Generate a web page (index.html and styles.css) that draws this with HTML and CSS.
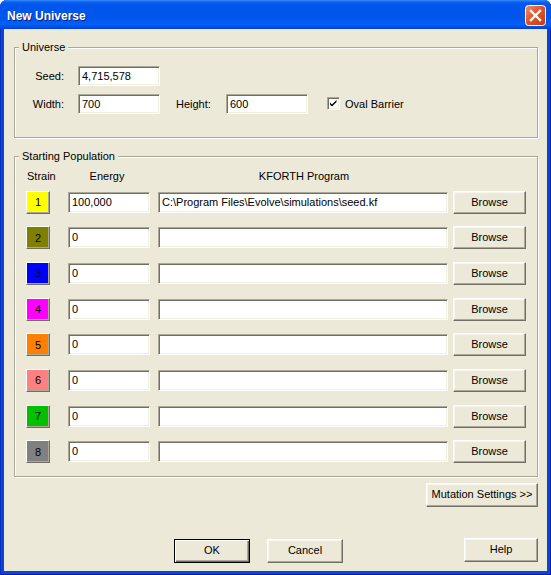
FILE: index.html
```html
<!DOCTYPE html>
<html>
<head>
<meta charset="utf-8">
<link rel="stylesheet" href="styles.css">
</head>
<body>
<div class="window">
  <div class="titlebar">
    <span class="title">New Universe</span>
    <span class="close">
      <svg width="21" height="21" viewBox="0 0 21 21">
        <defs>
          <linearGradient id="cg" x1="0" y1="0" x2="1" y2="1">
            <stop offset="0" stop-color="#F0906E"/>
            <stop offset="0.45" stop-color="#E0552C"/>
            <stop offset="1" stop-color="#C23A12"/>
          </linearGradient>
        </defs>
        <rect x="0.5" y="0.5" width="20" height="20" rx="3" ry="3" fill="url(#cg)" stroke="#fff" stroke-width="1"/>
        <path d="M6 6 L15 15 M15 6 L6 15" stroke="#fff" stroke-width="2.4" stroke-linecap="square"/>
      </svg>
    </span>
  </div>
  <div class="client">
    <div class="group group-universe">
      <div class="legend">Universe</div>
      <div class="urow urow-first">
        <span class="ulabel">Seed:</span>
        <div class="edit uedit">4,715,578</div>
      </div>
      <div class="urow">
        <span class="ulabel">Width:</span>
        <div class="edit uedit">700</div>
        <span class="hlabel">Height:</span>
        <div class="edit uedit">600</div>
        <span class="checkbox">
          <svg width="13" height="13" viewBox="0 0 13 13">
            <path d="M3 5.5 L5 7.5 L9.5 3 L9.5 5 L5 9.5 L3 7.5 Z" fill="#000"/>
          </svg>
        </span>
        <span class="checklabel">Oval Barrier</span>
      </div>
    </div>

    <div class="group group-pop">
      <div class="legend">Starting Population</div>
      <div class="prow phead">
        <span class="h-strain">Strain</span>
        <span class="h-energy">Energy</span>
        <span class="h-prog">KFORTH Program</span>
        <span class="h-browse"></span>
      </div>
      <div class="rows">
        <div class="prow"><span class="swatch s1">1</span><div class="edit eedit">100,000</div><div class="edit pedit">C:\Program Files\Evolve\simulations\seed.kf</div><span class="btn browse">Browse</span></div>
        <div class="prow"><span class="swatch s2">2</span><div class="edit eedit">0</div><div class="edit pedit"></div><span class="btn browse">Browse</span></div>
        <div class="prow"><span class="swatch s3">3</span><div class="edit eedit">0</div><div class="edit pedit"></div><span class="btn browse">Browse</span></div>
        <div class="prow"><span class="swatch s4">4</span><div class="edit eedit">0</div><div class="edit pedit"></div><span class="btn browse">Browse</span></div>
        <div class="prow"><span class="swatch s5">5</span><div class="edit eedit">0</div><div class="edit pedit"></div><span class="btn browse">Browse</span></div>
        <div class="prow"><span class="swatch s6">6</span><div class="edit eedit">0</div><div class="edit pedit"></div><span class="btn browse">Browse</span></div>
        <div class="prow"><span class="swatch s7">7</span><div class="edit eedit">0</div><div class="edit pedit"></div><span class="btn browse">Browse</span></div>
        <div class="prow"><span class="swatch s8">8</span><div class="edit eedit">0</div><div class="edit pedit"></div><span class="btn browse">Browse</span></div>
      </div>
    </div>

    <div class="mutrow"><span class="btn mut">Mutation Settings &gt;&gt;</span></div>

    <div class="footer">
      <span class="btn default">OK</span>
      <span class="btn cancel">Cancel</span>
      <span class="btn help">Help</span>
    </div>
  </div>
</div>
</body>
</html>
```

FILE: styles.css
```css
html, body {
  margin: 0;
  padding: 0;
  background: #ffffff;
}

body {
  font-family: "Liberation Sans", Arial, sans-serif;
  font-size: 11px;
  color: #000;
}

.window {
  width: 551px;
  height: 575px;
  box-sizing: border-box;
  display: flex;
  flex-direction: column;
  background: #0846D8;
  border-radius: 7px 7px 0 0;
  overflow: hidden;
  box-shadow: inset 1px 0 0 #0A2FC0, inset -1px 0 0 #001EA0, inset 0 -1px 0 #001EA0;
}

.titlebar {
  height: 29px;
  flex: none;
  display: flex;
  align-items: flex-start;
  justify-content: space-between;
  padding: 0 5px 0 7px;
  background: linear-gradient(to bottom,
    #3A8CF8 0px, #0A62F0 2px, #0058EE 4px, #0055EA 10px,
    #0056EC 18px, #0060F8 24px, #0050E8 27px, #003DD0 29px);
}

.title {
  color: #fff;
  font-weight: bold;
  font-size: 12px;
  line-height: 14px;
  margin-top: 9px;
  text-shadow: 1px 1px 0 #0A1E7A;
}

.close {
  width: 21px;
  height: 21px;
  margin-top: 5px;
  display: block;
}

.close svg {
  display: block;
}

.client {
  flex: 1;
  margin: 0 4px 4px 4px;
  background: #ECE9D8;
  display: flex;
  flex-direction: column;
}

.group {
  border: 1px solid #ACA899;
  box-shadow: inset 1px 1px 0 #fff, 1px 1px 0 #fff;
  margin-left: 10px;
  margin-right: 9px;
}

.legend {
  display: table;
  margin: -7px 0 0 4px;
  padding: 0 3px;
  line-height: 13px;
  background: #ECE9D8;
}

.group-universe {
  margin-top: 18px;
  padding: 0 0 23px 0;
}

.urow {
  display: flex;
  align-items: center;
  height: 20px;
  margin-top: 8px;
}

.urow-first {
  margin-top: 12px;
}

.ulabel {
  width: 49px;
  text-align: right;
  margin-right: 14px;
}

.edit {
  box-sizing: border-box;
  background: #fff;
  border-style: solid;
  border-width: 1px;
  border-color: #ACA899 #fff #fff #ACA899;
  box-shadow: inset 1px 1px 0 #716F64, inset -1px -1px 0 #F1EFE2;
  padding: 0 3px;
  line-height: 13px;
  display: flex;
  align-items: center;
  white-space: nowrap;
  overflow: hidden;
}

.uedit {
  width: 82px;
  height: 20px;
}

.hlabel {
  width: 50px;
  margin-left: 16px;
}

.checkbox {
  box-sizing: border-box;
  width: 13px;
  height: 13px;
  margin-left: 19px;
  margin-top: -1px;
  background: #fff;
  border-style: solid;
  border-width: 1px;
  border-color: #ACA899 #fff #fff #ACA899;
  box-shadow: inset 1px 1px 0 #716F64, inset -1px -1px 0 #F1EFE2;
}

.checkbox svg {
  display: block;
  margin: -1px 0 0 -1px;
}

.checklabel {
  margin-left: 5px;
}

.group-pop {
  margin-top: 18px;
  padding: 0 10px 12px 11px;
}

.group-pop .legend {
  margin-left: -7px;
}

.prow {
  display: flex;
  align-items: center;
  height: 24px;
}

.phead {
  height: 13px;
  margin-top: 7px;
  line-height: 13px;
}

.h-strain {
  width: 41px;
  margin-right: 1px;
  padding-left: 1px;
}

.h-energy {
  width: 82px;
  margin-right: 8px;
  text-align: center;
  padding-right: 6px;
  box-sizing: border-box;
}

.h-prog {
  width: 290px;
  text-align: center;
}

.rows {
  display: flex;
  flex-direction: column;
  gap: 11.7px;
  margin-top: 7px;
}

.swatch {
  box-sizing: border-box;
  width: 24px;
  height: 23px;
  margin-right: 18px;
  display: flex;
  align-items: center;
  justify-content: center;
  border-style: solid;
  border-width: 1px;
  border-color: #fff #716F64 #716F64 #fff;
  box-shadow: inset -1px -1px 0 #ACA899;
}

.s1 { background: #FFFF00; }
.s2 { background: #808000; }
.s3 { background: #0000FF; }
.s4 { background: #FF00FF; }
.s5 { background: #FF8000; }
.s6 { background: #FF8080; }
.s7 { background: #00C000; }
.s8 { background: #808080; }

.eedit {
  width: 82px;
  height: 21px;
  margin-right: 8px;
}

.pedit {
  width: 290px;
  height: 21px;
  margin-right: 5px;
}

.btn {
  box-sizing: border-box;
  display: flex;
  align-items: center;
  justify-content: center;
  background: #ECE9D8;
  border-style: solid;
  border-width: 1px;
  border-color: #fff #716F64 #716F64 #fff;
  box-shadow: inset -1px -1px 0 #ACA899, inset 1px 1px 0 #F7F6F0;
  line-height: 13px;
  white-space: nowrap;
}

.browse {
  width: 73px;
  height: 23px;
}

.mutrow {
  display: flex;
  justify-content: flex-end;
  margin: 6px 9px 0 0;
}

.mut {
  width: 112px;
  height: 24px;
}

.footer {
  display: flex;
  align-items: flex-start;
  margin-top: 31px;
  padding-left: 170px;
  padding-right: 9px;
}

.default {
  width: 76px;
  height: 24px;
  margin-top: 1px;
  border: 1px solid #000;
  box-shadow: inset 1px 1px 0 #fff, inset -1px -1px 0 #716F64, inset -2px -2px 0 #ACA899;
}

.cancel {
  width: 76px;
  height: 24px;
  margin-top: 1px;
  margin-left: 17px;
}

.help {
  width: 74px;
  height: 24px;
  margin-left: auto;
}
```
